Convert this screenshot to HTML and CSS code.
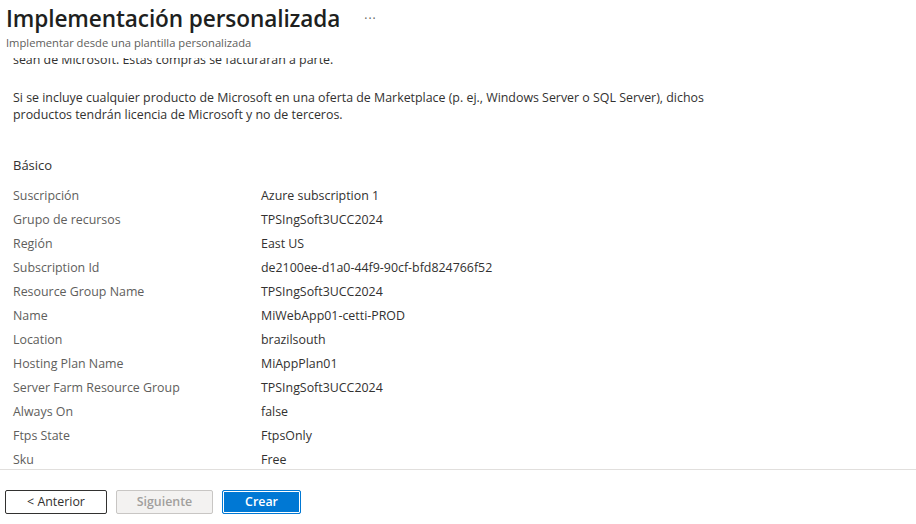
FILE: index.html
```html
<!DOCTYPE html>
<html lang="es">
<head>
<meta charset="utf-8">
<title>Implementación personalizada</title>
<link rel="stylesheet" href="styles.css">
</head>
<body>
<div class="blade">
  <header class="blade-header">
    <div class="title-row">
      <h1 class="title">Implementación personalizada</h1>
      <span class="more">···</span>
    </div>
    <div class="subtitle">Implementar desde una plantilla personalizada</div>
  </header>
  <main class="blade-content">
    <div class="scroll-inner">
      <p class="para para-clipped">sean de Microsoft. Estas compras se facturarán a parte.</p>
      <p class="para">Si se incluye cualquier producto de Microsoft en una oferta de Marketplace (p. ej., Windows Server o SQL Server), dichos productos tendrán licencia de Microsoft y no de terceros.</p>
      <h2 class="section">Básico</h2>
      <dl class="summary">
        <dt>Suscripción</dt><dd>Azure subscription 1</dd>
        <dt>Grupo de recursos</dt><dd>TPSIngSoft3UCC2024</dd>
        <dt>Región</dt><dd>East US</dd>
        <dt>Subscription Id</dt><dd>de2100ee-d1a0-44f9-90cf-bfd824766f52</dd>
        <dt>Resource Group Name</dt><dd>TPSIngSoft3UCC2024</dd>
        <dt>Name</dt><dd>MiWebApp01-cetti-PROD</dd>
        <dt>Location</dt><dd>brazilsouth</dd>
        <dt>Hosting Plan Name</dt><dd>MiAppPlan01</dd>
        <dt>Server Farm Resource Group</dt><dd>TPSIngSoft3UCC2024</dd>
        <dt>Always On</dt><dd>false</dd>
        <dt>Ftps State</dt><dd>FtpsOnly</dd>
        <dt>Sku</dt><dd>Free</dd>
      </dl>
    </div>
  </main>
  <footer class="blade-footer">
    <button class="btn btn-default">&lt; Anterior</button>
    <button class="btn btn-disabled" disabled>Siguiente</button>
    <button class="btn btn-primary">Crear</button>
  </footer>
</div>
</body>
</html>
```
FILE: styles.css
```css
* { box-sizing: border-box; }
html, body {
  margin: 0;
  padding: 0;
  background: #ffffff;
}
body {
  font-family: "Open Sans", "Noto Sans", "Liberation Sans", sans-serif;
  color: #323130;
  width: 916px;
  height: 524px;
  overflow: hidden;
}
.blade {
  display: flex;
  flex-direction: column;
  height: 524px;
}
.blade-header {
  height: 58px;
  padding: 3px 6px 0 6px;
  flex: none;
  background: #ffffff;
}
.title-row {
  display: flex;
  align-items: center;
  gap: 24px;
  height: 32px;
}
.title {
  margin: 0;
  font-size: 22.6px;
  font-weight: 600;
  line-height: 32px;
  color: #201f1e;
  letter-spacing: -0.1px;
}
.more {
  font-size: 12px;
  color: #605e5c;
  letter-spacing: 1px;
  margin-top: -2px;
}
.subtitle {
  font-size: 11.2px;
  line-height: 14px;
  color: #605e5c;
  margin-top: 1px;
}
.blade-content {
  flex: 1;
  overflow: hidden;
  padding: 0 13px;
}
.scroll-inner {
  margin-top: -7px;
}
.para {
  margin: 0 0 21px 0;
  font-size: 12.4px;
  line-height: 17px;
  max-width: 720px;
}
.section {
  margin: 32px 0 0 0;
  font-size: 13px;
  font-weight: 400;
  line-height: 20px;
  color: #323130;
}
.summary {
  display: grid;
  grid-template-columns: 248px 1fr;
  grid-auto-rows: 24px;
  margin: 9px 0 0 0;
  font-size: 12.4px;
  line-height: 24px;
}
.summary dt {
  color: #605e5c;
}
.summary dd {
  margin: 0;
  color: #323130;
}
.blade-footer {
  flex: none;
  height: 55px;
  border-top: 1px solid #e1dfdd;
  display: flex;
  align-items: flex-start;
  gap: 9px;
  padding: 20px 5px 0 5px;
}
.btn {
  font-family: inherit;
  font-size: 12.4px;
  font-weight: 600;
  height: 24px;
  padding: 0 12px;
  border-radius: 2px;
  line-height: 20px;
}
.btn-default {
  width: 102px;
  background: #ffffff;
  border: 1px solid #323130;
  color: #323130;
  font-weight: 400;
}
.btn-disabled {
  width: 97px;
  background: #f3f2f1;
  border: 1px solid #c8c6c4;
  color: #a19f9d;
}
.btn-primary {
  width: 79px;
  background: #0078d4;
  border: 1px solid #0078d4;
  color: #ffffff;
  box-shadow: inset 0 0 0 1px #ffffff;
}
```
